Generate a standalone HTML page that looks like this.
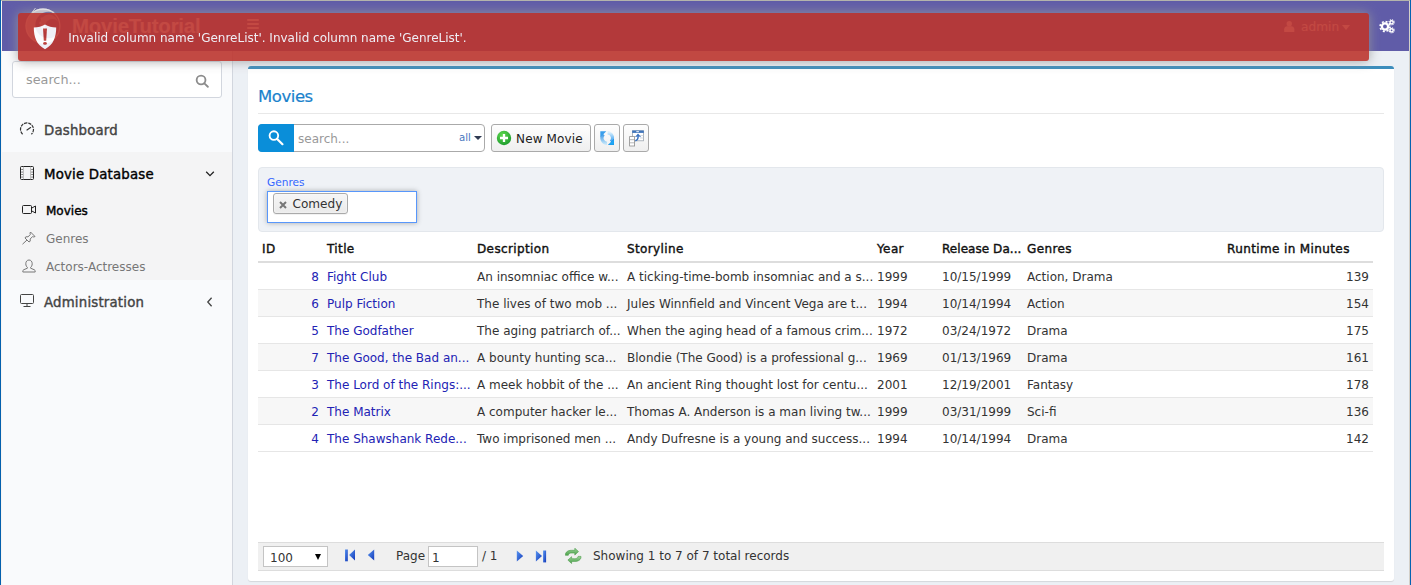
<!DOCTYPE html>
<html lang="en">
<head>
<meta charset="utf-8">
<title>Movies - MovieTutorial</title>
<style>
*{box-sizing:border-box;margin:0;padding:0}
html,body{width:1411px;height:585px;overflow:hidden;background:#ecf0f5}
body{font-family:"DejaVu Sans","Liberation Sans",sans-serif;font-size:12px;color:#333;position:relative}
.sb{-webkit-text-stroke:0.4px currentColor}
#edge-top{position:absolute;left:0;top:0;width:1411px;height:1px;background:#b4b4ac;z-index:50}
#edge-l1{position:absolute;left:0;top:0;width:1px;height:585px;background:#0460ae;z-index:51}
#edge-l2{position:absolute;left:1px;top:1px;width:1px;height:584px;background:#f8f4f0;z-index:51}
#edge-r1{position:absolute;left:1410px;top:0;width:1px;height:585px;background:#0563b1;z-index:51}
#edge-r2{position:absolute;left:1409px;top:1px;width:1px;height:584px;background:#d4d0c8;z-index:51}
/* header */
#hdr{position:absolute;left:2px;top:1px;width:1407px;height:50px;background:#605ca8;color:#fff}
#logo{position:absolute;left:23px;top:4px;width:38px;height:40px}
#brand{position:absolute;left:70px;top:11.5px;font-family:"Liberation Sans","DejaVu Sans",sans-serif;font-weight:bold;font-size:20.4px;line-height:26px;letter-spacing:-0.2px;color:#fff;white-space:nowrap}
#burger{position:absolute;left:245px;top:18px;width:12px;height:12px}
#burger i{display:block;height:2px;background:#fff;margin-bottom:2px;border-radius:1px}
#user{position:absolute;left:1280px;top:17px;font-size:12.2px;line-height:18px;white-space:nowrap}
#gears{position:absolute;left:1377px;top:17px;width:16px;height:16px}
/* sidebar */
#side{position:absolute;left:2px;top:51px;width:231px;height:534px;background:#f9fafc;border-right:1px solid #d2d6de}
#ssearch{position:absolute;left:10px;top:10px;width:210px;height:37px;border:1px solid #d2d6de;border-radius:3px;background:#fff}
#ssearch span{position:absolute;left:13px;top:9px;font-size:12.8px;line-height:18px;color:#999}
#ssearch svg{position:absolute;left:181.500px;top:12px}
.mi{position:absolute;left:0;width:230px;height:44px;color:#444}
.mi .t{position:absolute;left:42px;top:12.500px;font-size:13.3px;line-height:20px;letter-spacing:0.2px;white-space:nowrap}
.mi svg.ic{position:absolute;left:17px;top:13.200px}
.mi svg.ch{position:absolute;left:203px;top:17px}
#mdb{position:absolute;left:0;top:101px;width:230px;height:128px;background:#f4f4f5}
.smi{position:absolute;left:0;width:230px;height:28px;color:#777}
.smi .t{position:absolute;left:44px;top:5px;font-size:12px;line-height:18px;white-space:nowrap}
.smi svg{position:absolute;left:19px;top:5.600px}
/* content */
#box{position:absolute;left:248px;top:66px;width:1146px;height:515px;background:#fff;border-top:3px solid #3c8dbc;border-radius:3px;box-shadow:0 1px 1px rgba(0,0,0,.1)}
#title{position:absolute;left:10px;top:17px;font-size:16.5px;line-height:22px;letter-spacing:-0.45px;-webkit-text-stroke:0.2px #1a82cc;color:#1a82cc;white-space:nowrap}
#tline{position:absolute;left:10px;top:44px;width:1126px;height:1px;background:#e8e8e8}
/* toolbar (coords relative to #box: x-248, y-69) */
#qs{position:absolute;left:10px;top:55px;width:227px;height:28px;border:1px solid #aaa;border-radius:4px;background:#fff}
#qs .b{position:absolute;left:-1px;top:-1px;width:36px;height:28px;background:#0a8ed9;border-radius:4px 0 0 4px}
#qs .b svg{position:absolute;left:10px;top:6px}
#qs .ph{position:absolute;left:39px;top:5px;font-size:12px;line-height:18px;color:#999}
#qs .all{position:absolute;left:200px;top:6px;font-size:10.200px;line-height:14px;color:#4a78c0}
#qs .car{position:absolute;left:214.500px;top:11px;width:0;height:0;border:4px solid transparent;border-top:4.600px solid #2f3a52;border-bottom:0}
.btn{position:absolute;top:55px;height:28px;border:1px solid #aaa;border-radius:3px;background:linear-gradient(#fefefe,#efefef);white-space:nowrap}
.btn .t{position:absolute;left:24px;top:5px;font-size:12px;line-height:18px;color:#222;letter-spacing:0.15px}
/* filter bar */
#fb{position:absolute;left:10px;top:98px;width:1126px;height:65px;background:#eff2f6;border:1px solid #e3e7ec;border-radius:4px}
#fb .lbl{position:absolute;left:8px;top:7px;font-size:10.6px;line-height:14px;color:#3366ff}
#s2{position:absolute;left:8px;top:23px;width:150px;height:32px;background:#fff;border:1px solid #5897fb;box-shadow:0 0 5px rgba(0,0,0,.3)}
#tag{position:absolute;left:5px;top:1px;width:75px;height:21px;border:1px solid #aaa;border-radius:3px;background:linear-gradient(#f6f6f6,#eaeaea);box-shadow:0 0 2px #fff inset,0 1px 0 rgba(0,0,0,.05)}
#tag .x{position:absolute;left:4.500px;top:6.500px}
#tag .t{position:absolute;left:18.500px;top:.5px;font-size:12.100px;line-height:19px;color:#333}
/* grid */
#grid{position:absolute;left:10px;top:167px;width:1115px;border-collapse:separate;border-spacing:0;table-layout:fixed;font-size:12px}
#grid th{height:27px;text-align:left;font-weight:normal;color:#111;border-bottom:2px solid #ddd;padding:1px 0 0 4px;vertical-align:middle;white-space:nowrap;overflow:hidden;letter-spacing:0.38px}
#grid td{height:27px;border-bottom:1px solid #e6e6e6;padding:2px 0 0 4px;vertical-align:middle;white-space:nowrap;overflow:hidden;color:#333}
#grid tr.alt td{background:#f7f7f7}
#grid td.r,#grid th.r{text-align:right;padding-right:4px}
#grid a{color:#2222b4;text-decoration:none}
#grid td.id{color:#2222b4;text-align:right;padding-right:4px}
/* pager */
#pager{position:absolute;left:10px;top:473px;width:1126px;height:29px;background:#f0f0f0;border-top:1px solid #ddd;border-bottom:1px solid #ddd}
#pager .sel{position:absolute;left:5px;top:3px;width:65px;height:21px;background:#fff;border:1px solid #c4c4c4}
#pager .sel span{position:absolute;left:6px;top:3px;font-size:12px;line-height:16px}
#pager .sel i{position:absolute;left:51px;top:6.500px;width:0;height:0;border:3px solid transparent;border-top:6px solid #000;border-bottom:0}
#pager svg{position:absolute}
#pager .pg{position:absolute;left:138px;top:5px;line-height:16px}
#pager .inp{position:absolute;left:170px;top:3px;width:50px;height:21px;background:#fff;border:1px solid #c4c4c4}
#pager .inp span{position:absolute;left:3px;top:2.500px;line-height:16px}
#pager .of{position:absolute;left:224px;top:5px;line-height:16px}
#pager .st{position:absolute;left:335px;top:5px;line-height:16px}
/* toast */
#toast{position:absolute;left:18px;top:13px;width:1350.6px;height:48px;background:#bd362f;opacity:.9;border-radius:3px;box-shadow:0 0 12px #999;color:#fff;z-index:40}
#toast svg{position:absolute;left:14.600px;top:10.800px}
#toast .t{position:absolute;left:50.300px;top:15.700px;font-size:12px;line-height:18px;white-space:nowrap}
</style>
</head>
<body>
<div id="edge-top"></div><div id="edge-l1"></div><div id="edge-l2"></div><div id="edge-r1"></div><div id="edge-r2"></div>
<div id="hdr">
  <svg id="logo" viewBox="0 0 38 40">
    <defs><mask id="lm1"><rect width="38" height="40" fill="#000"/><circle cx="18" cy="21" r="17.500" fill="#fff"/><circle cx="23.500" cy="20" r="13.200" fill="#000"/></mask>
    <mask id="lm2"><rect width="38" height="40" fill="#000"/><circle cx="24" cy="18.500" r="9" fill="#fff"/><circle cx="27.500" cy="21.500" r="7.500" fill="#000"/></mask></defs>
    <rect width="38" height="40" fill="#fff" opacity=".78" mask="url(#lm1)"/>
    <circle cx="18" cy="21" r="16.900" fill="none" stroke="#fff" stroke-width="1.300" opacity=".9"/>
    <path d="M7 7.500 L10.500 3" stroke="#fff" stroke-width="1" opacity=".8"/>
    <rect width="38" height="40" fill="#fff" opacity=".55" mask="url(#lm2)"/>
    <circle cx="16.500" cy="13.500" r="1" fill="#fff" opacity=".55"/><circle cx="15.300" cy="18" r="1.200" fill="#fff" opacity=".55"/>
  </svg>
  <div id="brand">MovieTutorial</div>
  <div id="burger"><i></i><i></i><i></i></div>
  <div id="user"><svg width="10.5" height="11" viewBox="0 0 11 12" style="position:absolute;left:2px;top:3px"><circle cx="5.5" cy="3" r="2.9" fill="#fff"/><path d="M0 12 V9 C0 6.8 1.6 5.6 3.2 5.6 H7.8 C9.4 5.6 11 6.8 11 9 V12 Z" fill="#fff"/></svg><span style="margin-left:19px">admin</span><i style="position:absolute;left:60px;top:7px;width:0;height:0;border:4px solid transparent;border-top:5px solid #fff;border-bottom:0"></i></div>
  <svg id="gears" viewBox="0 0 16 16" fill="none" stroke="#fff">
    <circle cx="6" cy="8.5" r="3.1" stroke-width="2.3"/><circle cx="6" cy="8.5" r="4.9" stroke-width="1.6" stroke-dasharray="2 1.85"/>
    <circle cx="12.6" cy="4.3" r="1.6" stroke-width="1.4"/><circle cx="12.6" cy="4.3" r="2.6" stroke-width="1.1" stroke-dasharray="1.1 0.94"/>
    <circle cx="12.6" cy="12.3" r="1.6" stroke-width="1.4"/><circle cx="12.6" cy="12.3" r="2.6" stroke-width="1.1" stroke-dasharray="1.1 0.94"/>
  </svg>
</div>
<div id="side">
  <div id="ssearch"><span>search...</span><svg width="14.700" height="14.700" viewBox="0 0 16 16" fill="none" stroke="#8c8c8c" stroke-width="2" stroke-linecap="round"><circle cx="6.6" cy="6.5" r="4.8"/><path d="M10.2 10.2 L14 13.9"/></svg></div>
  <div class="mi" style="top:57px"><svg class="ic" width="16" height="16" viewBox="0 0 16 16" fill="none" stroke="#333" stroke-width="1.200"><path d="M3.6 13.2 A6.5 6.5 0 1 1 12.4 13.2" stroke-dasharray="3.2 0.9"/><path d="M8 9 L11.6 6.6" stroke-linecap="round"/></svg><span class="t sb">Dashboard</span></div>
  <div id="mdb">
    <div class="mi" style="top:0"><svg class="ic" width="16" height="16" viewBox="0 0 16 16" fill="none" stroke="#222" stroke-width="1"><rect x="1.5" y="1.5" width="13" height="13" rx="1"/><path d="M4.5 1.5 V14.5 M11.5 1.5 V14.5" stroke-width=".7" stroke="#aaa"/><path d="M3 4.5 h.1 M3 7 h.1 M3 9.5 h.1 M3 12 h.1 M13 4.5 h.1 M13 7 h.1 M13 9.5 h.1 M13 12 h.1" stroke-width="1.2" stroke-linecap="round"/></svg><span class="t sb" style="color:#000">Movie Database</span><svg class="ch" width="10" height="10" viewBox="0 0 10 10" fill="none" stroke="#222" stroke-width="1.3"><path d="M1.2 2.8 L5 6.6 L8.8 2.8"/></svg></div>
    <div class="smi" style="top:45px;color:#000"><svg width="16" height="14" viewBox="0 0 16 14" style="top:6.200px" fill="none" stroke="#222" stroke-width="1"><rect x="1.5" y="2.5" width="9" height="8" rx="1"/><path d="M10.5 5.2 L14.5 3 V10 L10.5 7.8"/></svg><span class="t sb">Movies</span></div>
    <div class="smi" style="top:73px"><svg width="16" height="14" viewBox="0 0 16 14" fill="none" stroke="#777" stroke-width="1" stroke-linejoin="round"><path d="M9.5 1 L14 5.5 L12.8 6 L11.5 5.6 L9.2 8 L9.2 10.2 L8 11 L4 7 L4.8 5.8 L7 5.8 L9.4 3.5 L9 2.2 Z"/><path d="M6 9 L1.5 13.2"/></svg><span class="t">Genres</span></div>
    <div class="smi" style="top:101px"><svg width="16" height="14" viewBox="0 0 16 14" fill="none" stroke="#777" stroke-width="1" stroke-linejoin="round"><path d="M8 1 C10 1 11.2 2.6 11.2 4.8 C11.2 6.6 10.4 7.8 9.6 8.4 V9.2 L13.4 10.8 C14 11.1 14.2 11.6 14.2 12.2 V13 H1.8 V12.2 C1.8 11.6 2 11.1 2.6 10.8 L6.4 9.2 V8.4 C5.6 7.8 4.8 6.6 4.8 4.8 C4.8 2.6 6 1 8 1 Z"/></svg><span class="t">Actors-Actresses</span></div>
  </div>
  <div class="mi" style="top:229px"><svg class="ic" width="16" height="16" viewBox="0 0 16 16" fill="none" stroke="#444" stroke-width="1"><rect x="1.5" y="1.5" width="13" height="9" rx="1"/><path d="M8 10.5 V13 M4.5 13.5 H11.5"/></svg><span class="t sb">Administration</span><svg class="ch" width="10" height="10" viewBox="0 0 10 10" fill="none" stroke="#444" stroke-width="1.3"><path d="M6.6 0.8 L2.8 5 L6.6 9.2"/></svg></div>
</div>
<div id="box">
  <div id="title">Movies</div>
  <div id="tline"></div>
  <div id="qs"><div class="b"><svg width="16.800" height="16.800" viewBox="0 0 18 18" fill="none" stroke="#fff" stroke-width="2" stroke-linecap="round"><circle cx="6.3" cy="6" r="4.6"/><path d="M9.8 9.6 L15.5 15.2" stroke-width="2.4"/></svg></div><span class="ph">search...</span><span class="all">all</span><i class="car"></i></div>
  <div class="btn" style="left:243px;width:100px"><svg width="16" height="16" viewBox="0 0 16 16" style="position:absolute;left:4px;top:5px"><defs><radialGradient id="gg" cx=".4" cy=".3" r=".8"><stop offset="0" stop-color="#5fd84f"/><stop offset="1" stop-color="#17962a"/></radialGradient></defs><circle cx="8" cy="8" r="7.2" fill="url(#gg)"/><path d="M8 4 V12 M4 8 H12" stroke="#fff" stroke-width="2.3"/></svg><span class="t">New Movie</span></div>
  <div class="btn" style="left:346px;width:26px"><svg width="14.500" height="14.200" viewBox="0 0 14.500 14.200" style="position:absolute;left:4.700px;top:5.800px">
    <defs><linearGradient id="ra" gradientUnits="userSpaceOnUse" x1="0" y1="2" x2="0" y2="13"><stop offset="0" stop-color="#2f8fe2"/><stop offset="1" stop-color="#c4e6fa"/></linearGradient>
    <linearGradient id="rb" gradientUnits="userSpaceOnUse" x1="0" y1="1.500" x2="0" y2="12"><stop offset="0" stop-color="#d8eefc"/><stop offset="1" stop-color="#1a90ee"/></linearGradient></defs>
    <path d="M6.900 12.300 A5.200 5.200 0 0 1 3.500 3.400" fill="none" stroke="url(#ra)" stroke-width="3.300"/>
    <path d="M7.600 1.900 A5.200 5.200 0 0 1 11 10.800" fill="none" stroke="url(#rb)" stroke-width="3.300"/>
    <path d="M0.300 0.300 H6.300 L0.300 6.300 Z" fill="#3a9fec"/><path d="M14.200 13.900 H8.200 L14.200 7.900 Z" fill="#1ea7f6" stroke="#1f86d8" stroke-width=".4"/>
  </svg></div>
  <div class="btn" style="left:375px;width:26px"><svg width="16" height="17" viewBox="0 0 16 17" style="position:absolute;left:5.200px;top:4.700px">
    <rect x="3.500" y=".8" width="11" height="10" fill="#fff" stroke="#9aa4ae" stroke-width=".8"/>
    <rect x="3.200" y=".5" width="11.600" height="2.400" fill="#3f74ba"/><rect x="7.300" y="1.100" width="2.600" height="1.100" fill="#e8f0fa"/>
    <path d="M11 5.500 H14.500 M11 8 H14.500" stroke="#c4ccd4" stroke-width=".7"/>
    <rect x=".6" y="6.600" width="5" height="9.400" fill="#fff" stroke="#8e8e8e" stroke-width=".8"/>
    <path d="M.6 9.700 H5.600 M.6 12.800 H5.600" stroke="#9a9a9a" stroke-width=".7"/>
    <path d="M6.300 10.700 C8.400 10.300 9.300 8.400 9.100 5.400" fill="none" stroke="#3a72c0" stroke-width="1.500"/><path d="M5.800 7.200 L9 3.600 L12.300 7.200 L9.200 6.300 Z" fill="#3a72c0"/>
  </svg></div>
  <div id="fb">
    <div class="lbl">Genres</div>
    <div id="s2"><div id="tag"><svg class="x" width="8" height="8" viewBox="0 0 8 8"><path d="M1 1 L7 7 M7 1 L1 7" stroke="#777" stroke-width="2"/></svg><span class="t">Comedy</span></div></div>
  </div>
  <table id="grid">
    <colgroup><col style="width:65px"><col style="width:150px"><col style="width:150px"><col style="width:250px"><col style="width:65px"><col style="width:85px"><col style="width:200px"><col style="width:150px"></colgroup>
    <thead><tr><th class="sb">ID</th><th class="sb">Title</th><th class="sb">Description</th><th class="sb">Storyline</th><th class="sb">Year</th><th class="sb" style="letter-spacing:0.05px">Release Da...</th><th class="sb">Genres</th><th class="sb">Runtime in Minutes</th></tr></thead>
    <tbody>
      <tr><td class="id">8</td><td><a>Fight Club</a></td><td>An insomniac office w...</td><td>A ticking-time-bomb insomniac and a s...</td><td>1999</td><td>10/15/1999</td><td>Action, Drama</td><td class="r">139</td></tr>
      <tr class="alt"><td class="id">6</td><td><a>Pulp Fiction</a></td><td>The lives of two mob ...</td><td>Jules Winnfield and Vincent Vega are t...</td><td>1994</td><td>10/14/1994</td><td>Action</td><td class="r">154</td></tr>
      <tr><td class="id">5</td><td><a>The Godfather</a></td><td>The aging patriarch of...</td><td>When the aging head of a famous crim...</td><td>1972</td><td>03/24/1972</td><td>Drama</td><td class="r">175</td></tr>
      <tr class="alt"><td class="id">7</td><td><a>The Good, the Bad an...</a></td><td>A bounty hunting sca...</td><td>Blondie (The Good) is a professional g...</td><td>1969</td><td>01/13/1969</td><td>Drama</td><td class="r">161</td></tr>
      <tr><td class="id">3</td><td><a>The Lord of the Rings:...</a></td><td>A meek hobbit of the ...</td><td>An ancient Ring thought lost for centu...</td><td>2001</td><td>12/19/2001</td><td>Fantasy</td><td class="r">178</td></tr>
      <tr class="alt"><td class="id">2</td><td><a>The Matrix</a></td><td>A computer hacker le...</td><td>Thomas A. Anderson is a man living tw...</td><td>1999</td><td>03/31/1999</td><td>Sci-fi</td><td class="r">136</td></tr>
      <tr><td class="id">4</td><td><a>The Shawshank Rede...</a></td><td>Two imprisoned men ...</td><td>Andy Dufresne is a young and success...</td><td>1994</td><td>10/14/1994</td><td>Drama</td><td class="r">142</td></tr>
    </tbody>
  </table>
  <div id="pager">
    <div class="sel"><span>100</span><i></i></div>
    <svg width="12" height="13" viewBox="0 0 12 13" style="left:86px;top:6px"><defs><linearGradient id="pb" x1="0" y1="0" x2="1" y2="1"><stop offset="0" stop-color="#5a97f2"/><stop offset="1" stop-color="#1238b8"/></linearGradient></defs><rect x="1" y=".5" width="2.800" height="11.800" fill="url(#pb)"/><path d="M11 .5 V11.500 L5.100 6 Z" fill="url(#pb)"/></svg>
    <svg width="8" height="13" viewBox="0 0 8 13" style="left:109px;top:6px"><path d="M7.200 .5 V11.500 L.8 6 Z" fill="url(#pb)"/></svg>
    <svg width="8" height="13" viewBox="0 0 8 13" style="left:258px;top:6.500px"><path d="M.8 .5 V11.600 L7.200 6 Z" fill="url(#pb)"/></svg>
    <svg width="12" height="13" viewBox="0 0 12 13" style="left:277px;top:6.500px"><path d="M.9 .5 V11.600 L7 6 Z" fill="url(#pb)"/><rect x="8.100" y=".5" width="3" height="11.900" fill="url(#pb)"/></svg>
    <svg width="17" height="16" viewBox="0 0 17 16" style="left:306.800px;top:5px"><defs><linearGradient id="pg1" x1="0" y1="0" x2="0" y2="1"><stop offset="0" stop-color="#9ad498"/><stop offset="1" stop-color="#4ea24c"/></linearGradient></defs>
      <path d="M.4 7.300 C.2 4 3 2.300 6.500 2.300 H9.800 V.2 L13.500 3.600 L9.800 7 V5 H6.800 C5 5 3.600 5.600 3.300 7.300 Z" fill="url(#pg1)" stroke="#4a9a48" stroke-width=".6" stroke-linejoin="round"/>
      <path d="M16 8.400 C16.200 11.700 13.400 13.400 9.900 13.400 H6.600 V15.500 L2.900 12.100 L6.600 8.700 V10.700 H9.600 C11.400 10.700 12.800 10.100 13.100 8.400 Z" fill="url(#pg1)" stroke="#4a9a48" stroke-width=".6" stroke-linejoin="round"/></svg>
    <span class="pg">Page</span><div class="inp"><span>1</span></div><span class="of">/ 1</span>
    <span class="st">Showing 1 to 7 of 7 total records</span>
  </div>
</div>
<div id="toast"><svg width="24" height="26" viewBox="0 0 24 26"><path d="M12 .6 C9 2.600 5 3.600 .8 3.600 C.8 13 3.500 21 12 25.200 C20.500 21 23.200 13 23.200 3.600 C19 3.600 15 2.600 12 .6 Z" fill="#fff"/><path d="M10 4.400 H14 L13.200 16.800 H10.800 Z" fill="#bd362f"/><ellipse cx="12" cy="19.400" rx="1.900" ry="1.400" fill="#bd362f"/></svg><span class="t">Invalid column name 'GenreList'. Invalid column name 'GenreList'.</span></div>
</body>
</html>
